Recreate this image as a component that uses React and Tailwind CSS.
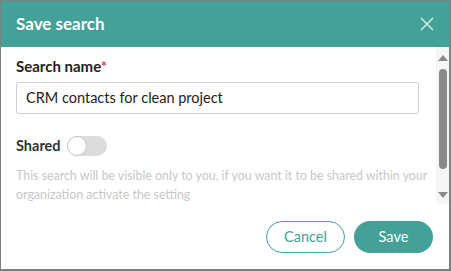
export default function App() {
  return (
    <div
      className="w-[451px] h-[271px] flex flex-col bg-white border-l border-t border-r-2 border-b-2 border-[#7f7f7f]"
      style={{ fontFamily: 'Lato, "Open Sans", sans-serif' }}
    >
      {/* Header */}
      <div className="h-[46px] shrink-0 bg-[#43a197] flex items-center justify-between pl-[15px] pr-[15px]">
        <h2 className="text-[17px] font-bold text-white">Save search</h2>
        <svg width="14" height="14" viewBox="0 0 14 14" className="text-[#c9ebe6]">
          <path d="M1 1 L13 13 M13 1 L1 13" stroke="currentColor" strokeWidth="1.6" />
        </svg>
      </div>

      {/* Body */}
      <div className="flex h-[157px] shrink-0">
        <div className="flex-1 pl-[15px] pr-[17px] pt-[9px]">
          <label className="block text-[15px] font-bold text-[#222] leading-[20px]">
            Search name<span className="text-[#e0474c]">*</span>
          </label>
          <div className="mt-[6px] h-[32px] border border-[#cfcfcf] rounded-[2px] flex items-center px-[9px] text-[14.5px] text-[#222]">
            CRM contacts for clean project
          </div>
          <div className="mt-[21px] flex items-center gap-[6px]">
            <span className="text-[14.5px] font-bold text-[#333]">Shared</span>
            <div className="relative w-[40px] h-[20px] rounded-full bg-[#dcdcdc]">
              <div className="absolute left-0 top-0 w-[20px] h-[20px] rounded-full bg-white border border-[#c8c8c8]" />
            </div>
          </div>
          <p className="mt-[9px] -mr-[12px] text-[12.4px] leading-[19px] text-[#c8c8c8]">
            This search will be visible only to you, if you want it to be shared within your organization activate the setting
          </p>
        </div>
        {/* Scrollbar */}
        <div className="w-[13px] bg-[#f6f6f6] flex flex-col items-center pt-[8px] pb-[6px]">
          <div className="w-0 h-0 border-l-[5px] border-r-[5px] border-b-[6px] border-l-transparent border-r-transparent border-b-[#8a8a8a]" />
          <div className="mt-[8px] w-[8px] h-[100px] rounded-full bg-[#8a8a8a]" />
          <div className="flex-1" />
          <div className="w-0 h-0 border-l-[5px] border-r-[5px] border-t-[6px] border-l-transparent border-r-transparent border-t-[#8a8a8a]" />
        </div>
      </div>

      {/* Footer */}
      <div className="flex-1 flex items-start justify-end gap-[9px] pt-[17px] pr-[16px]">
        <button className="w-[79px] h-[32px] rounded-full border border-[#43a197] text-[#43a197] text-[14.5px] bg-white">
          Cancel
        </button>
        <button className="w-[79px] h-[32px] rounded-full bg-[#43a197] text-white text-[14.5px]">
          Save
        </button>
      </div>
    </div>
  );
}
